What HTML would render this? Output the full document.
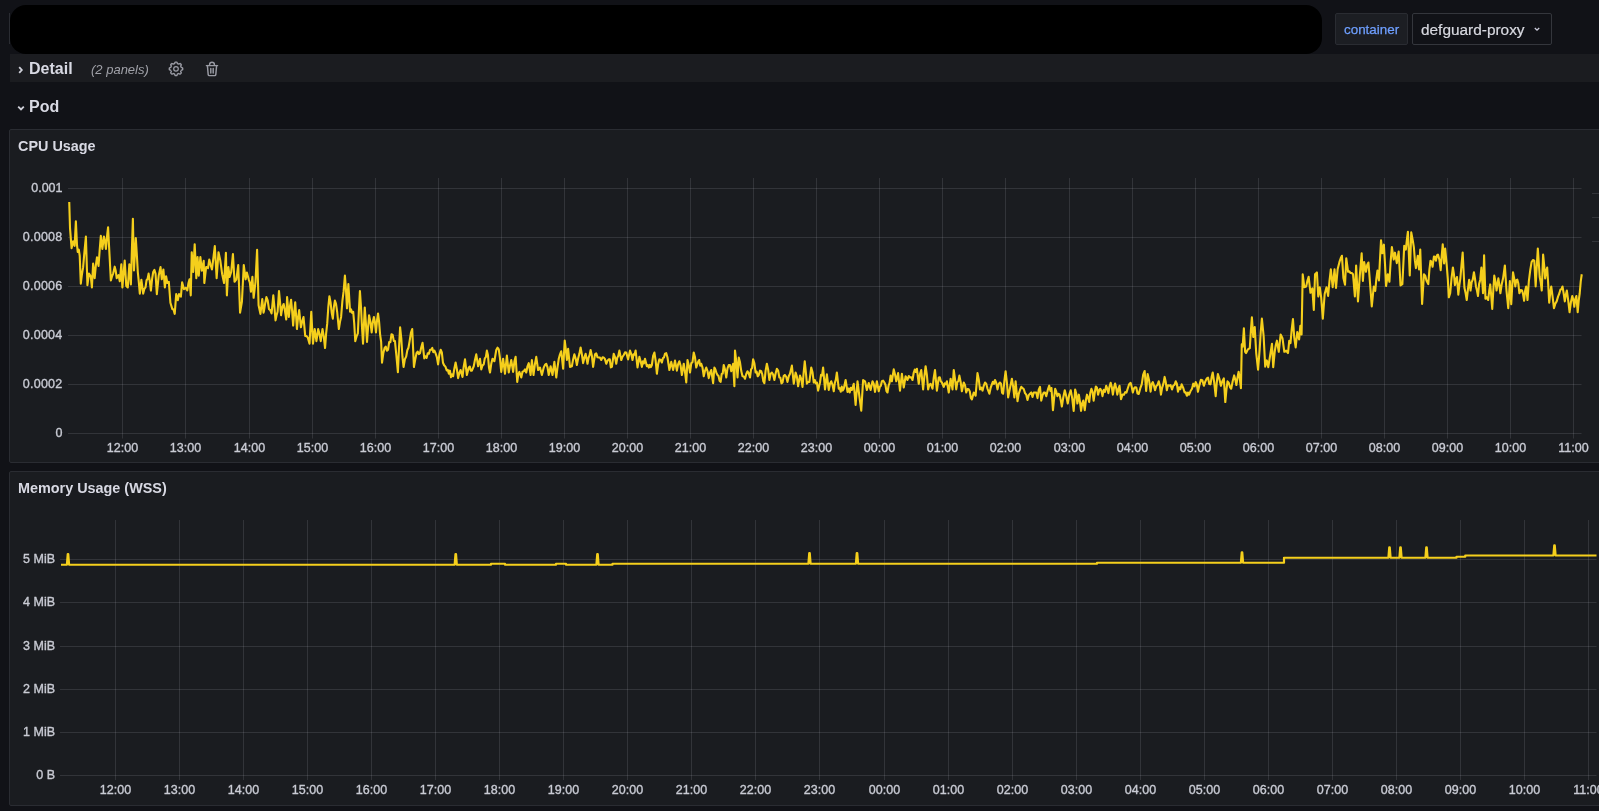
<!DOCTYPE html>
<html><head><meta charset="utf-8">
<style>
html,body{margin:0;padding:0;}
body{will-change:transform;width:1599px;height:811px;overflow:hidden;background:#111217;position:relative;font-family:"Liberation Sans",sans-serif;color:#ccccdc;}
.abs{position:absolute;}
#redact{left:10px;top:5px;width:1312px;height:49px;background:#000;border-radius:16px;}
#ghost{left:9px;top:13px;width:1px;height:31px;background:#2a2c32;}
#lbl{left:1335px;top:13px;width:71px;height:30px;background:#1c1e23;border:1px solid #2a2c32;border-radius:2px;}
#lbl span{position:absolute;left:8px;top:9px;font-size:13.4px;color:#6e9fff;line-height:14px;-webkit-text-stroke:0.25px #6e9fff;}
#val{left:1412px;top:13px;width:138px;height:30px;background:#111217;border:1px solid #34363c;border-radius:2px;}
#val span{position:absolute;left:8px;top:7px;font-size:15.4px;color:#d8d9e0;line-height:18px;-webkit-text-stroke:0.2px #d8d9e0;}
#row1{left:10px;top:54px;width:1589px;height:28px;background:#1b1c20;}
.rowt{font-size:16px;font-weight:bold;color:#d8d9e3;line-height:18px;margin-top:1px;}
.panel{left:9px;width:1600px;background:#1a1c20;border:1px solid #2a2c32;border-radius:2px;}
.ptitle{font-size:14.4px;font-weight:bold;color:#d8d9e3;line-height:16px;}
svg text{font-family:"Liberation Sans",sans-serif;stroke:#c9cbd4;stroke-width:0.35px;}
</style></head><body>
<div id="ghost" class="abs"></div>
<div id="redact" class="abs"></div>
<div id="lbl" class="abs"><span>container</span></div>
<div id="val" class="abs"><span>defguard-proxy</span>
<svg class="abs" style="left:119px;top:11px" width="10" height="8" viewBox="0 0 10 8"><path d="M2.8 3 L5 5.2 L7.2 3" fill="none" stroke="#ccccdc" stroke-width="1.3"/></svg>
</div>

<div id="row1" class="abs"></div>
<svg class="abs" style="left:0;top:0" width="240" height="90" viewBox="0 0 240 90">
<path d="M182.70 68.80 L182.69 69.06 L182.68 69.33 L182.65 69.59 L182.37 69.81 L181.93 69.98 L181.49 70.12 L181.20 70.27 L181.14 70.47 L181.07 70.67 L180.99 70.87 L180.90 71.06 L180.81 71.25 L180.71 71.44 L180.82 71.75 L181.03 72.16 L181.22 72.59 L181.26 72.95 L181.09 73.15 L180.92 73.35 L180.74 73.54 L180.55 73.72 L180.35 73.89 L180.15 74.06 L179.79 74.02 L179.36 73.83 L178.95 73.62 L178.64 73.51 L178.45 73.61 L178.26 73.70 L178.07 73.79 L177.87 73.87 L177.67 73.94 L177.47 74.00 L177.32 74.29 L177.18 74.73 L177.01 75.17 L176.79 75.45 L176.53 75.48 L176.26 75.49 L176.00 75.50 L175.74 75.49 L175.47 75.48 L175.21 75.45 L174.99 75.17 L174.82 74.73 L174.68 74.29 L174.53 74.00 L174.33 73.94 L174.13 73.87 L173.93 73.79 L173.74 73.70 L173.55 73.61 L173.36 73.51 L173.05 73.62 L172.64 73.83 L172.21 74.02 L171.85 74.06 L171.65 73.89 L171.45 73.72 L171.26 73.54 L171.08 73.35 L170.91 73.15 L170.74 72.95 L170.78 72.59 L170.97 72.16 L171.18 71.75 L171.29 71.44 L171.19 71.25 L171.10 71.06 L171.01 70.87 L170.93 70.67 L170.86 70.47 L170.80 70.27 L170.51 70.12 L170.07 69.98 L169.63 69.81 L169.35 69.59 L169.32 69.33 L169.31 69.06 L169.30 68.80 L169.31 68.54 L169.32 68.27 L169.35 68.01 L169.63 67.79 L170.07 67.62 L170.51 67.48 L170.80 67.33 L170.86 67.13 L170.93 66.93 L171.01 66.73 L171.10 66.54 L171.19 66.35 L171.29 66.16 L171.18 65.85 L170.97 65.44 L170.78 65.01 L170.74 64.65 L170.91 64.45 L171.08 64.25 L171.26 64.06 L171.45 63.88 L171.65 63.71 L171.85 63.54 L172.21 63.58 L172.64 63.77 L173.05 63.98 L173.36 64.09 L173.55 63.99 L173.74 63.90 L173.93 63.81 L174.13 63.73 L174.33 63.66 L174.53 63.60 L174.68 63.31 L174.82 62.87 L174.99 62.43 L175.21 62.15 L175.47 62.12 L175.74 62.11 L176.00 62.10 L176.26 62.11 L176.53 62.12 L176.79 62.15 L177.01 62.43 L177.18 62.87 L177.32 63.31 L177.47 63.60 L177.67 63.66 L177.87 63.73 L178.07 63.81 L178.26 63.90 L178.45 63.99 L178.64 64.09 L178.95 63.98 L179.36 63.77 L179.79 63.58 L180.15 63.54 L180.35 63.71 L180.55 63.88 L180.74 64.06 L180.92 64.25 L181.09 64.45 L181.26 64.65 L181.22 65.01 L181.03 65.44 L180.82 65.85 L180.71 66.16 L180.81 66.35 L180.90 66.54 L180.99 66.73 L181.07 66.93 L181.14 67.13 L181.20 67.33 L181.49 67.48 L181.93 67.62 L182.37 67.79 L182.65 68.01 L182.68 68.27 L182.69 68.54Z" fill="none" stroke="#9a9ba4" stroke-width="1.4" stroke-linejoin="round"/>
<circle cx="176" cy="68.8" r="2.3" fill="none" stroke="#9a9ba4" stroke-width="1.25"/>
<path d="M206.4 65.6H217.6 M209.6 65.6V64.6A2.4 2.4 0 0 1 214.4 64.6V65.6 M207.4 65.6L208.2 74.6Q208.3 75.6 209.3 75.6H214.7Q215.7 75.6 215.8 74.6L216.6 65.6 M210.8 68.4V73 M213.2 68.4V73" fill="none" stroke="#9a9ba4" stroke-width="1.45" stroke-linejoin="round" stroke-linecap="round"/>
</svg>
<svg class="abs" style="left:15px;top:64px" width="12" height="12" viewBox="0 0 12 12"><path d="M4.2 3.2 L6.8 6 L4.2 8.8" fill="none" stroke="#d0d1da" stroke-width="1.8"/></svg>
<div class="abs rowt" style="left:29px;top:59px">Detail</div>
<div class="abs" style="left:91px;top:62px;font-size:13px;font-style:italic;color:#a0a1a8;line-height:16px">(2 panels)</div>

<svg class="abs" style="left:15px;top:102px" width="12" height="12" viewBox="0 0 12 12"><path d="M3.2 4.6 L6 7.4 L8.8 4.6" fill="none" stroke="#d0d1da" stroke-width="1.8"/></svg>
<div class="abs rowt" style="left:29px;top:97px">Pod</div>

<div class="abs panel" style="top:129px;height:332px"></div>
<div class="abs ptitle" style="left:18px;top:138px">CPU Usage</div>

<div class="abs panel" style="top:471px;height:333px"></div>
<div class="abs ptitle" style="left:18px;top:480px">Memory Usage (WSS)</div>

<svg class="abs" style="left:0;top:0" width="1599" height="811" viewBox="0 0 1599 811"><path d="M68 188.5H1581.5 M68 237.5H1581.5 M68 286.5H1581.5 M68 335.5H1581.5 M68 384.5H1581.5 M68 433.5H1581.5" stroke="rgba(230,230,240,0.12)" stroke-width="1" fill="none"/>
<path d="M122.5 178V438.5 M185.5 178V438.5 M249.5 178V438.5 M312.5 178V438.5 M375.5 178V438.5 M438.5 178V438.5 M501.5 178V438.5 M564.5 178V438.5 M627.5 178V438.5 M690.5 178V438.5 M753.5 178V438.5 M816.5 178V438.5 M879.5 178V438.5 M942.5 178V438.5 M1005.5 178V438.5 M1069.5 178V438.5 M1132.5 178V438.5 M1195.5 178V438.5 M1258.5 178V438.5 M1321.5 178V438.5 M1384.5 178V438.5 M1447.5 178V438.5 M1510.5 178V438.5 M1573.5 178V438.5" stroke="rgba(230,230,240,0.12)" stroke-width="1" fill="none"/>
<path d="M1592 193.5H1599M1592 217.5H1599M1592 241.5H1599" stroke="rgba(230,230,240,0.12)" stroke-width="1"/>
<text x="62.5" y="191.8" text-anchor="end" font-size="12.5" fill="#c9cbd4">0.001</text>
<text x="62.5" y="240.8" text-anchor="end" font-size="12.5" letter-spacing="0.25" fill="#c9cbd4">0.0008</text>
<text x="62.5" y="289.8" text-anchor="end" font-size="12.5" letter-spacing="0.25" fill="#c9cbd4">0.0006</text>
<text x="62.5" y="338.8" text-anchor="end" font-size="12.5" letter-spacing="0.25" fill="#c9cbd4">0.0004</text>
<text x="62.5" y="387.8" text-anchor="end" font-size="12.5" letter-spacing="0.25" fill="#c9cbd4">0.0002</text>
<text x="62.5" y="436.8" text-anchor="end" font-size="12.5" fill="#c9cbd4">0</text>
<text x="122.5" y="452" text-anchor="middle" font-size="12.5" fill="#c9cbd4">12:00</text>
<text x="185.5" y="452" text-anchor="middle" font-size="12.5" fill="#c9cbd4">13:00</text>
<text x="249.5" y="452" text-anchor="middle" font-size="12.5" fill="#c9cbd4">14:00</text>
<text x="312.5" y="452" text-anchor="middle" font-size="12.5" fill="#c9cbd4">15:00</text>
<text x="375.5" y="452" text-anchor="middle" font-size="12.5" fill="#c9cbd4">16:00</text>
<text x="438.5" y="452" text-anchor="middle" font-size="12.5" fill="#c9cbd4">17:00</text>
<text x="501.5" y="452" text-anchor="middle" font-size="12.5" fill="#c9cbd4">18:00</text>
<text x="564.5" y="452" text-anchor="middle" font-size="12.5" fill="#c9cbd4">19:00</text>
<text x="627.5" y="452" text-anchor="middle" font-size="12.5" fill="#c9cbd4">20:00</text>
<text x="690.5" y="452" text-anchor="middle" font-size="12.5" fill="#c9cbd4">21:00</text>
<text x="753.5" y="452" text-anchor="middle" font-size="12.5" fill="#c9cbd4">22:00</text>
<text x="816.5" y="452" text-anchor="middle" font-size="12.5" fill="#c9cbd4">23:00</text>
<text x="879.5" y="452" text-anchor="middle" font-size="12.5" fill="#c9cbd4">00:00</text>
<text x="942.5" y="452" text-anchor="middle" font-size="12.5" fill="#c9cbd4">01:00</text>
<text x="1005.5" y="452" text-anchor="middle" font-size="12.5" fill="#c9cbd4">02:00</text>
<text x="1069.5" y="452" text-anchor="middle" font-size="12.5" fill="#c9cbd4">03:00</text>
<text x="1132.5" y="452" text-anchor="middle" font-size="12.5" fill="#c9cbd4">04:00</text>
<text x="1195.5" y="452" text-anchor="middle" font-size="12.5" fill="#c9cbd4">05:00</text>
<text x="1258.5" y="452" text-anchor="middle" font-size="12.5" fill="#c9cbd4">06:00</text>
<text x="1321.5" y="452" text-anchor="middle" font-size="12.5" fill="#c9cbd4">07:00</text>
<text x="1384.5" y="452" text-anchor="middle" font-size="12.5" fill="#c9cbd4">08:00</text>
<text x="1447.5" y="452" text-anchor="middle" font-size="12.5" fill="#c9cbd4">09:00</text>
<text x="1510.5" y="452" text-anchor="middle" font-size="12.5" fill="#c9cbd4">10:00</text>
<text x="1573.5" y="452" text-anchor="middle" font-size="12.5" fill="#c9cbd4">11:00</text>
<path d="M69.24 201.93 L70.02 228.13 L71.56 248.16 L73.1 241.22 L74.64 245.85 L75.87 221.19 L76.95 244.31 L77.72 252.01 L78.8 249.7 L79.72 255.86 L80.8 283.6 L81.96 274.2 L83.11 267.42 L84.5 251.13 L85.89 236.6 L87.43 285.14 L88.97 273.58 L90.82 276.66 L91.9 287.45 L93.13 263.57 L94.67 278.2 L95.82 265.68 L96.98 257.4 L98.52 265.88 L99.68 250.17 L100.83 235.83 L102.37 248.93 L103.91 236.6 L104.92 240.93 L105.92 248.93 L107 236.73 L108.07 227.36 L109.61 256.63 L110.85 280.52 L112 276.4 L113.16 273.58 L114.7 266.65 L115.7 270.66 L116.7 278.2 L118.55 275.12 L119.78 281.29 L121.33 264.34 L122.4 287.45 L123.56 273.37 L124.71 260.49 L126.26 285.91 L127.8 287.45 L129.34 264.34 L130.88 284.37 L131.88 250.04 L132.88 218.88 L133.96 270.5 L135.81 238.14 L136.81 254.42 L137.81 272.04 L138.81 282.1 L139.82 293.61 L141.36 279.75 L143.2 293.61 L144.36 288.97 L145.52 287.45 L146.54 280.26 L147.57 279.01 L148.6 273.58 L149.75 281 L150.91 290.53 L152.06 279.22 L153.22 272.04 L154.38 269.94 L155.53 273.58 L156.85 294.12 L158.7 275.62 L160.55 266.99 L161.78 279.32 L163.38 269.46 L164.86 287.34 L166.1 276.24 L167.33 283.02 L168.81 281.79 L170.41 302.75 L172.26 308.91 L173.5 309.44 L174.73 313.85 L176.21 294.12 L177.81 300.28 L179.04 294.12 L180.89 296.58 L182.13 282.4 L183.98 289.19 L185.83 287.95 L187.31 290.42 L188.42 283.38 L189.53 279.32 L190.76 295.35 L191.74 252.19 L193.22 271.92 L194.7 244.18 L196.31 278.09 L197.54 257.13 L198.77 275.62 L200.38 257.13 L201.86 270.69 L203.71 260.83 L204.32 283.02 L206.17 266.99 L208.02 268.22 L209.25 259.59 L210.49 264.53 L211.97 269.46 L213.2 259.59 L214.8 246.03 L216.65 278.09 L218.5 252.19 L220.35 260.83 L222.2 274.39 L224.05 283.02 L225.9 252.81 L226.89 295.35 L228.37 266.99 L229.6 276.86 L231.2 271.92 L232.93 254.04 L234.53 281.79 L236.38 279.32 L238.23 265.14 L240.08 312.61 L241.93 301.52 L243.78 265.14 L245.63 279.32 L246.86 272.54 L248.71 279.32 L249.82 282.55 L250.93 291.65 L252.41 276.86 L253.64 297.82 L255.49 281.79 L257.1 249.73 L258.58 305.22 L260.43 313.85 L262.27 299.05 L263.51 312.61 L263.81 311.77 L265.1 303.82 L266.39 297.1 L267.69 300.49 L268.98 309.18 L270.28 310.11 L271.57 313.49 L273.3 295.38 L274.42 307.03 L275.54 320.4 L276.57 315.29 L277.61 311.77 L278.99 291.06 L280.03 301.87 L281.06 315.22 L282.36 307.07 L283.65 304 L284.94 310.82 L286.24 319.53 L287.1 297.1 L288.83 316.95 L289.95 306.36 L291.07 299.69 L292.11 310.53 L293.14 325.57 L294.18 312.49 L295.21 302.28 L296.94 329.03 L298.06 317.66 L299.18 310.04 L300.91 327.3 L302.2 321.47 L303.49 316.95 L305.22 335.93 L306.51 336.14 L307.81 337.65 L309.53 343.69 L311.26 311.77 L312.99 343.69 L314.71 329.03 L316.44 341.1 L318.16 329.03 L319.46 334.05 L320.75 341.1 L322.48 329.03 L323.77 336.31 L325.06 348.01 L326.14 333.5 L327.22 323.41 L328.3 307.22 L329.38 296.24 L330.53 302.08 L331.68 312.44 L332.83 318.67 L333.87 307.13 L334.9 300.55 L336.02 303.91 L337.14 311.77 L338.87 329.03 L339.99 321.88 L341.11 316.95 L342.38 301.2 L343.64 291.15 L344.91 275.53 L345.94 289.24 L346.98 308.32 L348.36 284.16 L350.09 311.77 L351.12 309.45 L352.16 312.99 L353.19 311.77 L354.23 323.49 L355.26 341.1 L356.56 336.43 L357.85 333.34 L358.89 310.65 L359.92 291.06 L360.96 306.21 L361.99 327.03 L363.03 343.69 L364.75 307.45 L365.88 322.99 L367 341.97 L368.03 328 L369.07 315.22 L370.36 321.68 L371.66 332.48 L372.78 322.3 L373.9 316.95 L374.94 322.78 L375.97 332.48 L377.01 320.3 L378.04 313.49 L379.08 321.7 L380.11 334.71 L381.15 341.97 L382.01 362.67 L383.3 353.35 L384.6 348.01 L385.75 346.63 L386.9 350.8 L388.05 349.73 L389.2 341.96 L390.35 342.24 L391.5 334.2 L392.65 334.82 L393.8 340.96 L394.95 341.1 L396.42 355.98 L397.89 372.17 L399.01 347.48 L400.13 327.3 L401.28 338.41 L402.43 356.74 L403.58 366.99 L404.87 359.26 L406.17 356.64 L407.32 350.25 L408.47 347.75 L409.62 341.1 L410.91 332.89 L412.21 329.03 L413.93 366.99 L415.23 359.53 L416.52 353.18 L417.67 351.53 L418.82 354.1 L419.97 353.18 L421.27 347.21 L422.56 342.83 L424.29 358.36 L425.44 356.28 L426.59 357.91 L427.74 353.22 L428.89 353.73 L430.04 349.69 L431.19 349.73 L432.27 347.92 L433.35 352.16 L434.43 350.7 L435.5 353.18 L436.8 356.92 L438.09 364.4 L439.39 354.36 L440.68 349.73 L441.83 352.36 L442.98 362.75 L444.13 365.26 L445.43 366.66 L446.72 370.44 L447.79 369.87 L448.86 373.77 L449.92 370.63 L450.99 377.21 L452.06 374.4 L453.12 376.25 L454.38 368.43 L455.62 362.5 L456.88 369.23 L458.12 378.12 L459.38 372.98 L460.62 370 L462.5 376.88 L463.75 366.41 L465 359.38 L466.88 375 L468.75 367.5 L469.79 366.57 L470.83 370.74 L471.88 370.62 L473.75 366.25 L475 359.8 L476.25 354.38 L478.12 366.25 L480 358.75 L481.25 369.38 L482.5 365.33 L483.75 364.38 L484.79 358.37 L485.83 357.12 L486.88 350.62 L487.92 355.03 L488.96 367.43 L490 372.5 L491.25 363.84 L492.5 358.75 L494.38 361.25 L496.25 350 L497.5 347.64 L498.75 349.38 L500 358.43 L501.25 371.88 L503.12 358.75 L505 373.75 L506.88 355.62 L508.75 372.5 L510 365.62 L511.25 360 L513.12 371.88 L514.38 361.63 L515.62 356.88 L517.25 381.88 L518.31 374.43 L519.38 371.88 L521.25 377.5 L522.5 371.69 L523.75 371.25 L525 369.38 L526.25 372.5 L527.5 366.33 L528.75 363.12 L530.62 375 L531.88 360 L533.5 375 L534.88 364.44 L536.25 356.88 L538.12 370 L540 367.5 L541.88 375 L543.75 367.5 L545 364.87 L546.25 363.75 L547.5 367.29 L548.75 375 L550.62 366.25 L552.5 375 L554.38 361.88 L556.25 377.5 L557.5 367.47 L558.75 358.75 L560 354.33 L561.25 351.25 L563.12 368.75 L564.75 340.62 L565.81 349.29 L566.88 360 L568.12 348.75 L570 366.88 L571.88 366.25 L573.12 359.41 L574.38 354.38 L575.62 358.34 L576.88 365 L578.12 358.54 L579.38 353.83 L580.62 347.5 L581.88 354.43 L583.12 363.12 L584.38 357.68 L585.62 353.75 L587.5 363.75 L588.54 357.76 L589.58 355.15 L590.62 350 L591.88 355.75 L593.12 366.88 L595 354.38 L596.25 353.38 L597.5 357.33 L598.75 357.5 L600 357.62 L601.25 360 L602.5 357.38 L603.75 357.5 L605 359.21 L606.25 363.75 L607.5 360.76 L608.75 359.38 L609.79 359.25 L610.83 367.36 L611.88 366.88 L613.75 353.75 L615 357.09 L616.25 363.75 L617.29 357.67 L618.33 355.71 L619.38 350.62 L621.25 360 L622.5 356.74 L623.75 355 L625 352.39 L626.25 352.5 L628.12 359.38 L630 350.62 L631.25 354.15 L632.5 360 L633.54 354.3 L634.58 354.65 L635.62 350.62 L637.5 367.5 L639.38 356.88 L640.62 361.32 L641.88 366.88 L642.92 361.29 L643.96 363.28 L645 358.75 L646.88 366.25 L647.88 365.13 L648.88 367.61 L649.88 364.93 L650.88 367.07 L651.88 365 L653.12 355.8 L654.38 352.5 L655.62 360.47 L656.88 373.75 L658.12 364.32 L659.38 359.38 L660.62 359.78 L661.88 362.5 L662.92 358.17 L663.96 357.58 L665 353.75 L666.25 353.2 L667.5 357.5 L669.38 370 L671.25 361.88 L673.12 370 L675 360.62 L676.88 370.62 L678.12 364.11 L679.38 361.25 L680.62 365.68 L681.88 375 L683.75 363.75 L685 371.8 L686.25 382.5 L687.5 360 L688.75 365.19 L690 372.5 L691.25 363.3 L692.5 362.13 L693.75 352.5 L695 357.37 L696.25 367.5 L698.12 361.88 L699.17 359.98 L700.21 365.67 L701.25 363.75 L702.5 367.65 L703.75 376.25 L705 370.81 L706.25 367.5 L707.5 371.02 L708.75 378.12 L710 372.67 L711.25 370 L713.12 383.12 L714.38 367.5 L715.42 369.43 L716.46 373.07 L717.5 375 L718.54 376.09 L719.58 380.73 L720.62 381.88 L721.67 374.02 L722.71 373.52 L723.75 365 L725 369.63 L726.25 377.5 L727.5 368.41 L728.75 365 L730 365.15 L731.25 371.25 L733.12 363.75 L734.38 386.25 L735 350.62 L736.25 361.17 L737.5 377.5 L738.75 357.5 L740 362.34 L741.25 371.05 L742.5 376.25 L743.75 376.43 L745 378.75 L746.25 374.01 L747.5 371.25 L748.75 373.36 L750 377.5 L751.04 369.4 L752.08 368.17 L753.12 359.38 L754.38 363.34 L755.62 372.5 L756.67 371.63 L757.71 376.3 L758.75 375 L760 370.63 L761.25 371.25 L762.29 374.5 L763.33 381.32 L764.38 383.12 L765.62 370.66 L766.88 363.75 L768.12 369.42 L769.38 380 L770.62 373.87 L771.88 372.5 L773.12 374.55 L774.38 380 L775.62 373.43 L776.88 368.75 L778.12 370.65 L779.38 377.5 L780.42 377.84 L781.46 383.34 L782.5 382.5 L783.75 375.82 L785 375 L786.25 376.95 L787.5 381.88 L788.75 376.31 L790 373.75 L791.88 365.62 L793.75 383.75 L795.62 372.5 L796.88 376.51 L798.12 386.25 L800 375.62 L801.25 378.94 L802.5 386.88 L803.62 373.14 L804.75 361.25 L805.81 371.68 L806.88 383.75 L808.12 381.93 L809.38 381.88 L811.25 367.5 L812.5 372.24 L813.75 382.5 L814.79 379.98 L815.83 383.37 L816.88 382.5 L818.12 390.62 L820 382.5 L821.04 374.93 L822.08 375.45 L823.12 367.5 L825 389.38 L826.88 374.38 L828.75 390 L830 383.48 L831.25 381.25 L832.5 384.87 L833.75 391.25 L834.79 383.13 L835.83 379.58 L836.88 372.5 L838.75 388.75 L839.75 388.21 L840.75 391.68 L841.75 386.63 L842.75 390.57 L843.75 388.75 L845.62 380 L847.5 391.88 L848.59 388.57 L849.69 392.52 L850.78 387.79 L851.88 390 L853.75 383.75 L855.62 405 L857.5 381.25 L859.38 396.25 L861.25 410.62 L863.12 380 L865 381.25 L866.88 390 L868.75 383.12 L870.62 390 L872.5 381.25 L873.75 384 L875 391.88 L876.88 381.25 L878.75 391.25 L879.79 386.89 L880.83 385.71 L881.88 381.25 L883.12 380.64 L884.38 382.5 L885.42 384.73 L886.46 391.13 L887.5 392.5 L888.54 385.73 L889.58 382.8 L890.62 375.62 L891.88 381.25 L893.75 369.38 L895 374.48 L896.25 381.25 L898.12 373.12 L900 390.62 L901.88 373.75 L903.75 387.5 L905.62 376.25 L907.5 380 L908.75 375.97 L910 377.5 L911.25 377.37 L912.5 380 L913.75 372.5 L914.79 369.6 L915.83 371.96 L916.88 368.75 L918.75 383.75 L920 374.11 L921.25 370 L923.12 389.38 L924.38 376.26 L925.62 366.25 L926.88 375.02 L928.12 389.38 L929.38 384.81 L930.62 383.75 L932.5 388.75 L933.75 377.55 L935 370 L936.88 390.62 L938.75 377.5 L939.79 377.36 L940.83 381.38 L941.88 382.5 L943.75 386.88 L944.79 383.4 L945.83 384.08 L946.88 381.25 L948.75 392.5 L950.62 378.75 L952.5 389.38 L953.75 370 L955 379.18 L956.25 389.38 L957.29 382.29 L958.33 381.14 L959.38 375.62 L960.62 381.75 L961.88 391.25 L963.75 382.5 L965 385.19 L966.25 392.5 L967.5 389.05 L968.75 389.38 L969.79 391.39 L970.83 397.84 L971.88 399.38 L973.75 392.5 L975.62 395.62 L977.5 373.12 L978.75 379.36 L980 389.38 L981.25 387.54 L982.5 390.62 L983.75 385.8 L985 382.5 L986.25 383.72 L987.5 388.75 L989.38 393.75 L990.62 387.94 L991.88 384.38 L992.92 381.72 L993.96 383.89 L995 380 L996.25 382.92 L997.5 389.38 L998.75 384.03 L1000 382.5 L1001.04 383.85 L1002.08 392.78 L1003.12 393.75 L1004.38 380.89 L1005.62 371.25 L1006.88 382.34 L1008.12 397.5 L1010 388.12 L1011.88 378.75 L1013.12 386.36 L1014.38 397.5 L1015.62 381.25 L1017.5 401.25 L1018.75 393.84 L1020 390 L1021.25 386.83 L1022.5 388.12 L1023.75 388.99 L1025 393.12 L1026.25 394.73 L1027.5 400 L1028.75 395.18 L1030 393.75 L1031.25 392.46 L1032.5 396.88 L1033.75 392.44 L1035 392.5 L1036.25 392.62 L1037.5 398.12 L1038.75 389.64 L1040 386.88 L1041.25 400.62 L1042.5 395.41 L1043.75 392.5 L1045 392.48 L1046.25 396.25 L1048.12 388.75 L1049.24 385.65 L1050.36 390.86 L1051.48 388.02 L1052.96 410.21 L1054.07 398.64 L1055.18 388.76 L1056.29 391.65 L1057.4 396.15 L1058.51 393.81 L1059.62 394.67 L1060.72 399.91 L1061.83 406.51 L1063.31 397.27 L1064.79 390.24 L1066.27 396.21 L1067.75 403.55 L1069.23 394.72 L1070.71 390.24 L1072.19 398.13 L1073.67 410.95 L1075.15 389.5 L1076.26 393.78 L1077.37 403.55 L1078.85 394.67 L1079.96 401.92 L1081.07 410.95 L1082.17 403.48 L1083.28 400.59 L1084.76 410.21 L1085.87 400.29 L1086.98 394.67 L1088.09 397.52 L1089.2 402.07 L1090.31 392.71 L1091.42 388.76 L1092.53 391.76 L1093.64 400.59 L1094.75 392.52 L1095.86 386.54 L1096.97 387.73 L1098.08 394.67 L1099.19 390.22 L1100.3 388.76 L1101.41 390.74 L1102.51 396.15 L1103.75 389.73 L1104.98 391.83 L1106.21 385.8 L1107.32 388.59 L1108.43 393.2 L1109.54 386.44 L1110.65 382.84 L1111.76 386.97 L1112.87 394.67 L1113.98 387.78 L1115.09 383.58 L1116.2 388.14 L1117.31 394.67 L1118.42 388.94 L1119.53 385.8 L1121.01 399.11 L1122.49 394.59 L1123.96 394.67 L1125.2 392.15 L1126.43 392.61 L1127.66 388.76 L1129.14 384.2 L1130.62 382.84 L1131.73 387.1 L1132.84 392.46 L1133.95 388.54 L1135.06 387.28 L1136.29 387.44 L1137.52 393.5 L1138.76 393.93 L1140.24 388.47 L1141.72 384.32 L1143.2 374.7 L1144.67 371.01 L1146.15 390.98 L1147.63 373.96 L1149.11 380.37 L1150.59 391.72 L1151.7 383.98 L1152.81 382.1 L1153.92 385.41 L1155.03 390.24 L1156.26 386.11 L1157.5 384.92 L1158.73 381.36 L1159.84 385.57 L1160.95 394.67 L1162.18 387.58 L1163.41 383.66 L1164.64 376.92 L1165.75 382.02 L1166.86 390.24 L1167.97 385.24 L1169.08 385.8 L1170.56 385.1 L1172.04 389.5 L1173.27 385.64 L1174.51 384.95 L1175.74 381.36 L1176.85 383.74 L1177.96 391.72 L1179.19 387.32 L1180.42 389.04 L1181.66 384.32 L1183.14 387.66 L1184.62 392.46 L1185.72 392.37 L1186.83 395.79 L1187.94 392.56 L1189.05 394.67 L1190.53 391.03 L1192.01 388.76 L1193.24 383.69 L1194.48 386.41 L1195.71 382.1 L1196.82 384.4 L1197.93 391.72 L1199.41 385.09 L1200.89 379.88 L1202.37 380.2 L1203.85 385.8 L1205.33 381.43 L1206.8 378.4 L1208.04 377.72 L1209.27 383.98 L1210.5 384.32 L1211.61 377.05 L1212.72 372.49 L1214.2 382.44 L1215.68 396.15 L1216.79 382.24 L1217.9 373.96 L1219.38 378.71 L1220.86 385.8 L1222.34 381.28 L1223.82 378.4 L1225.3 402.07 L1226.41 389.9 L1227.51 381.36 L1228.75 382.73 L1229.98 387.07 L1231.21 388.76 L1232.69 381.2 L1234.17 375.44 L1235.28 379.63 L1236.39 385.06 L1237.5 377.4 L1238.61 371.75 L1239.76 378.67 L1240.92 388.16 L1241.78 344.39 L1242.64 346.86 L1243.88 328.36 L1245.11 351.79 L1246.1 353.02 L1247.95 349.32 L1249.8 348.09 L1250.84 331.41 L1251.89 317.26 L1253.25 336.99 L1254.73 327.13 L1256.21 353.02 L1258.06 369.67 L1259.66 349.32 L1260.77 331.51 L1261.88 318.5 L1263.61 335.76 L1265.21 366.58 L1266.81 360.42 L1268.29 367.2 L1270.14 355.49 L1271.99 343.77 L1273.22 367.2 L1274.7 351.79 L1275.81 345.01 L1276.92 340.69 L1278.77 351.79 L1280.62 334.53 L1282.47 338.22 L1284.32 351.79 L1286.17 350.55 L1288.02 353.02 L1289.25 340.69 L1290.49 343.16 L1291.72 329.38 L1292.95 319.11 L1294.19 336.99 L1295.67 347.47 L1297.27 332.06 L1299.12 339.46 L1300.35 325.89 L1301.58 334.53 L1302.71 274.27 L1304.32 287.22 L1306.17 286.6 L1307.4 280.72 L1308.63 276.73 L1310.48 292.77 L1312.33 288.45 L1313.81 310.03 L1315.05 274.27 L1316.9 272.42 L1318.25 296.47 L1319.73 287.22 L1321.21 297.7 L1322.82 318.67 L1324.67 294 L1326.52 287.22 L1328.12 295.85 L1329.48 281.22 L1330.83 269.33 L1332.68 287.22 L1334.53 269.33 L1336.01 287.83 L1337.62 269.33 L1339.47 261.93 L1340.7 258.31 L1341.93 255.77 L1343.41 277.97 L1345.02 284.75 L1346.25 258.23 L1348.1 271.8 L1349.33 271.29 L1350.57 273.03 L1351.8 273.11 L1353.03 274.27 L1354.88 296.47 L1356.12 265.63 L1357.97 301.4 L1359.82 275.5 L1361.67 253.3 L1362.9 281.05 L1364.13 261.93 L1365.98 271.8 L1367.22 264.84 L1368.45 262.55 L1370.3 286.6 L1371.78 306.33 L1373.75 286.6 L1375.23 290.92 L1376.34 278.86 L1377.45 270.57 L1378.93 280.43 L1379.98 259.42 L1381.03 240.35 L1382.39 253.3 L1383.87 244.67 L1384.98 263.64 L1386.09 285.98 L1387.81 274.27 L1389.42 281.67 L1390.65 261.56 L1391.88 247.13 L1393.73 259.47 L1394.97 252.68 L1396.82 263.17 L1398.67 251.45 L1400.52 285.37 L1402.37 284.13 L1404.22 245.9 L1405.82 249.6 L1406.87 239.89 L1407.92 231.72 L1409.77 275.5 L1411.25 232.33 L1412.85 240.97 L1413.88 247.46 L1414.91 260.64 L1415.93 268.1 L1417.78 255.77 L1419.02 269.33 L1420.25 249.6 L1422.1 303.87 L1423.95 274.27 L1425.19 275.61 L1426.42 280.43 L1428.27 284.13 L1429.39 269.83 L1430.52 260.69 L1431.54 262.26 L1432.56 266.8 L1433.91 256.63 L1434.93 256.89 L1435.95 260.69 L1436.96 255.42 L1437.98 254.59 L1439.34 259.43 L1440.69 270.19 L1441.71 255.95 L1442.73 244.42 L1444.09 263.41 L1445.17 248.49 L1446.8 266.12 L1447.82 279.14 L1448.83 297.32 L1450.19 293.25 L1451.55 278.1 L1452.9 267.48 L1453.92 274.2 L1454.94 285.11 L1455.95 279.53 L1456.97 276.97 L1458.33 294.61 L1459.35 285.1 L1460.36 278.33 L1461.52 264.81 L1462.67 252.56 L1464.43 287.82 L1465.59 293.1 L1466.74 300.03 L1467.96 289.18 L1469.18 279.69 L1470.54 290.54 L1471.67 282.08 L1472.8 279.47 L1473.93 272.22 L1474.95 278.44 L1475.96 286.47 L1476.98 290.5 L1478 295.96 L1479.13 283.86 L1480.26 279.65 L1481.39 267.48 L1483.02 293.25 L1484.1 255.27 L1485.46 298.68 L1486.81 297.18 L1488.17 300.03 L1489.19 291.03 L1490.21 284.43 L1491.22 295.54 L1492.24 308.85 L1493.26 291 L1494.28 275.62 L1495.43 281.43 L1496.58 290.54 L1498.35 278.33 L1499.36 284.9 L1500.38 293.25 L1501.74 284.17 L1503.09 278.33 L1504.86 265.44 L1506.48 290.54 L1508.25 308.17 L1509.88 281.04 L1511.23 304.1 L1513 272.22 L1514.15 278.19 L1515.3 286.47 L1516.32 280.17 L1517.34 279.69 L1518.35 283.54 L1519.37 293.25 L1520.73 290.03 L1522.08 290.54 L1523.1 294.51 L1524.12 300.71 L1525.14 290.68 L1526.15 286.47 L1527.51 300.03 L1528.87 281.04 L1530.22 270.27 L1531.58 262.05 L1532.94 259.98 L1534.29 260.69 L1535.65 286.47 L1536.73 266.97 L1537.82 248.49 L1539.72 276.97 L1540.74 282.3 L1541.75 290.54 L1543.11 254.59 L1544.13 264.77 L1545.14 278.33 L1546.16 271.15 L1547.18 267.48 L1548.2 284.11 L1549.21 302.75 L1550.23 292.84 L1551.25 286.47 L1552.6 296.81 L1553.96 308.17 L1555.32 303.62 L1556.67 301.39 L1558.03 296.6 L1559.39 293.25 L1560.43 289.49 L1561.47 289.33 L1562.51 286.47 L1563.66 293.37 L1564.81 301.39 L1565.83 294.7 L1566.85 290.54 L1568.2 300.31 L1569.56 312.24 L1570.92 302.14 L1572.27 295.96 L1573.29 299.57 L1574.31 306.81 L1575.33 299.01 L1576.34 295.96 L1577.7 312.24 L1578.72 300.6 L1579.73 293.25 L1580.75 281.46 L1581.77 274.26" stroke="#f5cf1c" stroke-width="2.1" fill="none" stroke-linejoin="round"/>
<path d="M60 775.5H1596.5 M60 732.5H1596.5 M60 689.5H1596.5 M60 646.5H1596.5 M60 602.5H1596.5 M60 559.5H1596.5" stroke="rgba(230,230,240,0.12)" stroke-width="1" fill="none"/>
<path d="M115.5 520V780 M179.5 520V780 M243.5 520V780 M307.5 520V780 M371.5 520V780 M435.5 520V780 M499.5 520V780 M563.5 520V780 M627.5 520V780 M691.5 520V780 M755.5 520V780 M819.5 520V780 M884.5 520V780 M948.5 520V780 M1012.5 520V780 M1076.5 520V780 M1140.5 520V780 M1204.5 520V780 M1268.5 520V780 M1332.5 520V780 M1396.5 520V780 M1460.5 520V780 M1524.5 520V780 M1588.5 520V780" stroke="rgba(230,230,240,0.12)" stroke-width="1" fill="none"/>
<text x="55" y="778.9" text-anchor="end" font-size="12.5" fill="#c9cbd4">0 B</text>
<text x="55" y="735.9" text-anchor="end" font-size="12.5" fill="#c9cbd4">1 MiB</text>
<text x="55" y="692.9" text-anchor="end" font-size="12.5" fill="#c9cbd4">2 MiB</text>
<text x="55" y="649.9" text-anchor="end" font-size="12.5" fill="#c9cbd4">3 MiB</text>
<text x="55" y="605.9" text-anchor="end" font-size="12.5" fill="#c9cbd4">4 MiB</text>
<text x="55" y="562.9" text-anchor="end" font-size="12.5" fill="#c9cbd4">5 MiB</text>
<text x="115.5" y="794" text-anchor="middle" font-size="12.5" fill="#c9cbd4">12:00</text>
<text x="179.5" y="794" text-anchor="middle" font-size="12.5" fill="#c9cbd4">13:00</text>
<text x="243.5" y="794" text-anchor="middle" font-size="12.5" fill="#c9cbd4">14:00</text>
<text x="307.5" y="794" text-anchor="middle" font-size="12.5" fill="#c9cbd4">15:00</text>
<text x="371.5" y="794" text-anchor="middle" font-size="12.5" fill="#c9cbd4">16:00</text>
<text x="435.5" y="794" text-anchor="middle" font-size="12.5" fill="#c9cbd4">17:00</text>
<text x="499.5" y="794" text-anchor="middle" font-size="12.5" fill="#c9cbd4">18:00</text>
<text x="563.5" y="794" text-anchor="middle" font-size="12.5" fill="#c9cbd4">19:00</text>
<text x="627.5" y="794" text-anchor="middle" font-size="12.5" fill="#c9cbd4">20:00</text>
<text x="691.5" y="794" text-anchor="middle" font-size="12.5" fill="#c9cbd4">21:00</text>
<text x="755.5" y="794" text-anchor="middle" font-size="12.5" fill="#c9cbd4">22:00</text>
<text x="819.5" y="794" text-anchor="middle" font-size="12.5" fill="#c9cbd4">23:00</text>
<text x="884.5" y="794" text-anchor="middle" font-size="12.5" fill="#c9cbd4">00:00</text>
<text x="948.5" y="794" text-anchor="middle" font-size="12.5" fill="#c9cbd4">01:00</text>
<text x="1012.5" y="794" text-anchor="middle" font-size="12.5" fill="#c9cbd4">02:00</text>
<text x="1076.5" y="794" text-anchor="middle" font-size="12.5" fill="#c9cbd4">03:00</text>
<text x="1140.5" y="794" text-anchor="middle" font-size="12.5" fill="#c9cbd4">04:00</text>
<text x="1204.5" y="794" text-anchor="middle" font-size="12.5" fill="#c9cbd4">05:00</text>
<text x="1268.5" y="794" text-anchor="middle" font-size="12.5" fill="#c9cbd4">06:00</text>
<text x="1332.5" y="794" text-anchor="middle" font-size="12.5" fill="#c9cbd4">07:00</text>
<text x="1396.5" y="794" text-anchor="middle" font-size="12.5" fill="#c9cbd4">08:00</text>
<text x="1460.5" y="794" text-anchor="middle" font-size="12.5" fill="#c9cbd4">09:00</text>
<text x="1524.5" y="794" text-anchor="middle" font-size="12.5" fill="#c9cbd4">10:00</text>
<text x="1588.5" y="794" text-anchor="middle" font-size="12.5" fill="#c9cbd4">11:00</text>
<path d="M61 564.75 L66.9 564.75 L67.75 554 L68.25 554 L69.1 564.75 L454.65 564.75 L455.5 554 L456 554 L456.85 564.75 L491 564.75 L491 563.75 L505 563.75 L505 564.75 L556 564.75 L556 563.75 L566 563.75 L566 564.75 L596.4 564.75 L597.25 554 L597.75 554 L598.6 564.75 L612.5 564.75 L612.5 563.75 L808.4 563.75 L809.25 553 L809.75 553 L810.6 563.75 L855.9 563.75 L856.75 553 L857.25 553 L858.1 563.75 L1097 563.75 L1097 562.75 L1240.9 562.75 L1241.75 552.25 L1242.25 552.25 L1243.1 562.75 L1284 562.75 L1284 557.75 L1388.4 557.75 L1389.25 547.25 L1389.75 547.25 L1390.6 557.75 L1399.4 557.75 L1400.25 547.25 L1400.75 547.25 L1401.6 557.75 L1425.4 557.75 L1426.25 547.25 L1426.75 547.25 L1427.6 557.75 L1456.5 557.75 L1456.5 556.75 L1465.25 556.75 L1465.25 555.5 L1553.4 555.5 L1554.25 545.25 L1554.75 545.25 L1555.6 555.5 L1596.5 555.5" stroke="#f5cf1c" stroke-width="2.2" fill="none" stroke-linejoin="round"/></svg>
</body></html>
